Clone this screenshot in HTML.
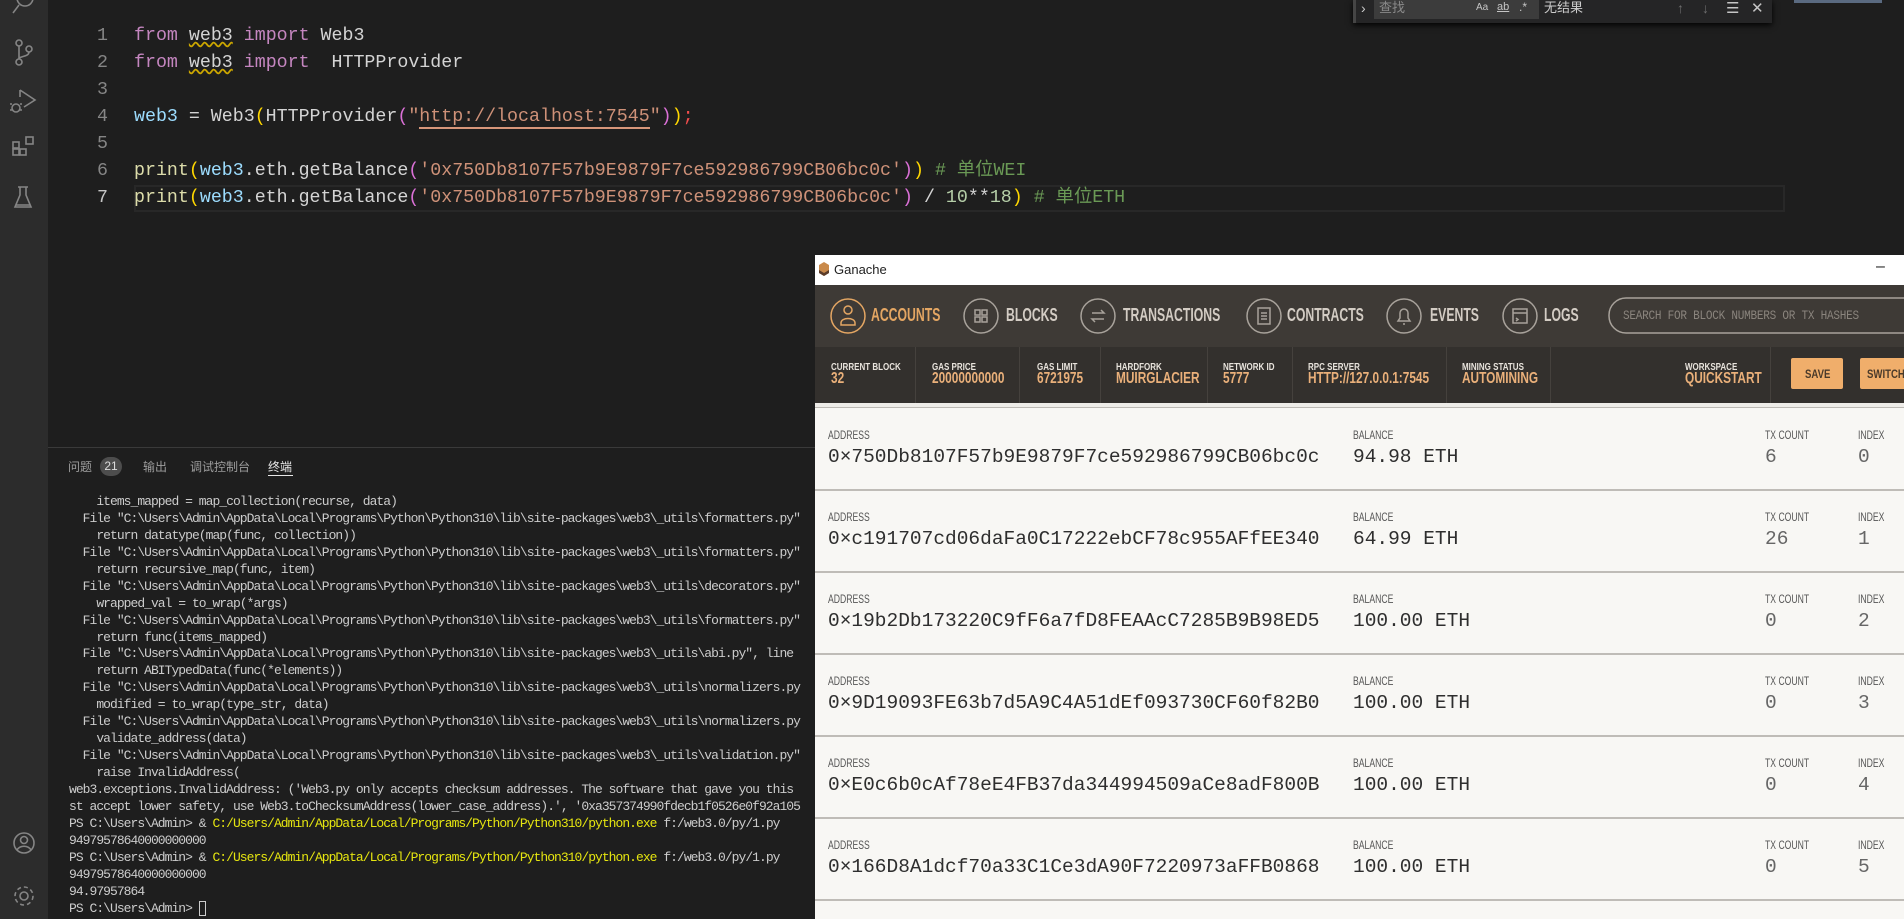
<!DOCTYPE html>
<html><head><meta charset="utf-8">
<style>
*{margin:0;padding:0;box-sizing:border-box}
body{width:1904px;height:919px;background:#1e1e1e;position:relative;overflow:hidden;font-family:"Liberation Sans","Noto Sans CJK SC",sans-serif}
.a{position:absolute;white-space:pre}
.code{font-family:"Liberation Mono","Noto Sans CJK SC",monospace;font-size:18.3px;line-height:27px;color:#d4d4d4}
.ln{color:#858585;text-align:right;width:40px}
.k{color:#c586c0}.v{color:#9cdcfe}.f{color:#dcdcaa}.s{color:#ce9178}.c{color:#6a9955}.n{color:#b5cea8}.y{color:#ffd700}.p{color:#da70d6}
.term{font-family:"Liberation Mono","Noto Sans CJK SC",monospace;font-size:13px;letter-spacing:-0.97px;line-height:16.93px;color:#cccccc}
.ty{color:#e5e510}
.nav{font-weight:bold;font-size:18px;color:#d3ccc4;transform:scaleX(.68);transform-origin:left center}
.sl{font-weight:bold;font-size:10px;color:#e8e3dc;transform:scaleX(.8);transform-origin:left center}
.sv{font-weight:bold;font-size:16px;color:#eab07a;transform:scaleX(.74);transform-origin:left center}
.rl{font-size:12px;color:#555;transform:scaleX(.72);transform-origin:left center}
.rv{font-family:"Liberation Mono",monospace;font-size:19.5px;color:#2e2e2e}
.rg{font-family:"Liberation Mono",monospace;font-size:19.5px;color:#666}
</style></head><body>

<div class="a" style="left:0;top:0;width:48px;height:919px;background:#2c2c2c"></div>
<svg class="a" style="left:0;top:0" width="48" height="919" fill="none" stroke="#858585" stroke-width="1.6">
<circle cx="25" cy="-2" r="8"/><line x1="19" y1="5" x2="13" y2="13"/>
<circle cx="19" cy="43" r="3"/><circle cx="29" cy="49" r="3"/><circle cx="19" cy="62" r="3"/><path d="M19 46V59M29 52c0 5-10 4-10 7"/>
<path d="M20 90L35 100L24 107M20 90V97"/><circle cx="16" cy="108" r="4"/><path d="M10 104h2M10 110h2M20 104h2M20 110h2"/>
<rect x="13" y="142" width="6" height="6"/><rect x="13" y="149" width="6" height="6"/><rect x="20" y="149" width="6" height="6"/><rect x="26" y="137" width="7" height="7"/>
<path d="M18 187h10M20 187v8l-5 12h16l-5-12v-8M16 205h14"/>
<circle cx="24" cy="843" r="10"/><circle cx="24" cy="840" r="3.5"/><path d="M17 850c3-5 11-5 14 0"/>
<circle cx="24" cy="896" r="4"/><circle cx="24" cy="896" r="9" stroke-dasharray="4 3"/>
</svg>

<div class="a" style="left:1353px;top:0;width:419px;height:23px;background:#252526;box-shadow:0 2px 6px #000"></div>
<div class="a" style="left:1353px;top:0;width:3px;height:23px;background:#454545"></div>
<div class="a" style="left:1361px;top:0;color:#ccc;font-size:14px">›</div>
<div class="a" style="left:1374px;top:0;width:165px;height:19px;background:#3c3c3c"></div>
<div class="a" style="left:1379px;top:0;color:#8a8a8a;font-size:13px;line-height:16px">查找</div>
<div class="a" style="left:1476px;top:2px;color:#c5c5c5;font-size:10px">Aa</div>
<div class="a" style="left:1497px;top:1px;color:#c5c5c5;font-size:11px;text-decoration:underline">ab</div>
<div class="a" style="left:1519px;top:0;color:#c5c5c5;font-size:12px">.*</div>
<div class="a" style="left:1544px;top:0;color:#ccc;font-size:13px;line-height:16px">无结果</div>
<div class="a" style="left:1677px;top:0;color:#6e6e6e;font-size:14px">↑</div>
<div class="a" style="left:1702px;top:0;color:#6e6e6e;font-size:14px">↓</div>
<div class="a" style="left:1726px;top:-1px;color:#c5c5c5;font-size:15px">☰</div>
<div class="a" style="left:1751px;top:-1px;color:#c5c5c5;font-size:15px">✕</div>
<div class="a" style="left:1794px;top:0;width:88px;height:3px;background:#5a6a80"></div>

<div class="a" style="left:134px;top:185px;width:1651px;height:27px;border:2px solid #282828"></div>
<div class="a code ln" style="left:68px;top:23px">1
2
3
4
5
6
<span style="color:#c6c6c6">7</span></div>
<div class="a code" style="left:134px;top:23px"><span class="k">from</span> <span style="text-decoration:underline wavy #cca700">web3</span> <span class="k">import</span> Web3
<span class="k">from</span> <span style="text-decoration:underline wavy #cca700">web3</span> <span class="k">import</span>  HTTPProvider

<span class="v">web3</span> = Web3<span class="y">(</span>HTTPProvider<span class="p">(</span><span class="s">"<span style="border-bottom:2px solid #d7967a">http://localhost:7545</span>"</span><span class="p">)</span><span class="y">)</span><span style="color:#f14c4c">;</span>

<span class="f">print</span><span class="y">(</span><span class="v">web3</span>.eth.getBalance<span class="p">(</span><span class="s">'0x750Db8107F57b9E9879F7ce592986799CB06bc0c'</span><span class="p">)</span><span class="y">)</span> <span class="c"># 单位WEI</span>
<span class="f">print</span><span class="y">(</span><span class="v">web3</span>.eth.getBalance<span class="p">(</span><span class="s">'0x750Db8107F57b9E9879F7ce592986799CB06bc0c'</span><span class="p">)</span> / <span class="n">10</span>**<span class="n">18</span><span class="y">)</span> <span class="c"># 单位ETH</span></div>

<div class="a" style="left:48px;top:447px;width:800px;height:1px;background:#3a3a3a"></div>
<div class="a" style="left:68px;top:458px;color:#9d9d9d;font-size:12px">问题</div>
<div class="a" style="left:100px;top:457px;width:22px;height:19px;border-radius:10px;background:#4d4d4d;color:#ddd;font-size:12px;text-align:center;line-height:19px">21</div>
<div class="a" style="left:143px;top:458px;color:#9d9d9d;font-size:12px">输出</div>
<div class="a" style="left:190px;top:458px;color:#9d9d9d;font-size:12px">调试控制台</div>
<div class="a" style="left:268px;top:458px;color:#e7e7e7;font-size:12px">终端</div>
<div class="a" style="left:268px;top:475px;width:25px;height:1px;background:#e7e7e7"></div>
<div class="a term" style="left:69px;top:494px">    items_mapped = map_collection(recurse, data)
  File "C:\Users\Admin\AppData\Local\Programs\Python\Python310\lib\site-packages\web3\_utils\formatters.py"
    return datatype(map(func, collection))
  File "C:\Users\Admin\AppData\Local\Programs\Python\Python310\lib\site-packages\web3\_utils\formatters.py"
    return recursive_map(func, item)
  File "C:\Users\Admin\AppData\Local\Programs\Python\Python310\lib\site-packages\web3\_utils\decorators.py"
    wrapped_val = to_wrap(*args)
  File "C:\Users\Admin\AppData\Local\Programs\Python\Python310\lib\site-packages\web3\_utils\formatters.py"
    return func(items_mapped)
  File "C:\Users\Admin\AppData\Local\Programs\Python\Python310\lib\site-packages\web3\_utils\abi.py", line
    return ABITypedData(func(*elements))
  File "C:\Users\Admin\AppData\Local\Programs\Python\Python310\lib\site-packages\web3\_utils\normalizers.py
    modified = to_wrap(type_str, data)
  File "C:\Users\Admin\AppData\Local\Programs\Python\Python310\lib\site-packages\web3\_utils\normalizers.py
    validate_address(data)
  File "C:\Users\Admin\AppData\Local\Programs\Python\Python310\lib\site-packages\web3\_utils\validation.py"
    raise InvalidAddress(
web3.exceptions.InvalidAddress: ('Web3.py only accepts checksum addresses. The software that gave you this
st accept lower safety, use Web3.toChecksumAddress(lower_case_address).', '0xa357374990fdecb1f0526e0f92a105
PS C:\Users\Admin&gt; &amp; <span class="ty">C:/Users/Admin/AppData/Local/Programs/Python/Python310/python.exe</span> f:/web3.0/py/1.py
94979578640000000000
PS C:\Users\Admin&gt; &amp; <span class="ty">C:/Users/Admin/AppData/Local/Programs/Python/Python310/python.exe</span> f:/web3.0/py/1.py
94979578640000000000
94.97957864
PS C:\Users\Admin&gt; <span style="display:inline-block;width:7px;height:15px;border:1px solid #ccc;vertical-align:middle"></span></div>

<div class="a" style="left:815px;top:255px;width:1089px;height:664px;background:#f8f7f4"></div>
<div class="a" style="left:815px;top:255px;width:1089px;height:30px;background:#fff"></div>
<svg class="a" style="left:818px;top:261px" width="12" height="16"><path d="M6 1L11 4V12L6 15L1 12V4Z" fill="#c98a4b"/><path d="M1 9L6 12L11 9V12L6 15L1 12Z" fill="#5a3c2a"/></svg>
<div class="a" style="left:834px;top:262px;font-size:13px;color:#222">Ganache</div>
<div class="a" style="left:1876px;top:258px;font-size:16px;color:#222">–</div>
<div class="a" style="left:815px;top:285px;width:1089px;height:62px;background:#3e3a36"></div>
<svg class="a" style="left:815px;top:285px" width="1089" height="62" fill="none" stroke="#a8a29b" stroke-width="1.5">
<circle cx="33" cy="31" r="17" stroke="#e4a663"/><circle cx="33" cy="25" r="4" stroke="#e4a663"/><path d="M26 38c0-6 14-6 14 0v2h-14z" stroke="#e4a663"/>
<circle cx="166" cy="31" r="17"/><rect x="160" y="25" width="5" height="5"/><rect x="167" y="25" width="5" height="5"/><rect x="160" y="32" width="5" height="5"/><rect x="167" y="32" width="5" height="5"/>
<circle cx="283" cy="31" r="17"/><path d="M277 28h12l-3-3M289 34h-12l3 3"/>
<circle cx="449" cy="31" r="17"/><rect x="443" y="23" width="12" height="16"/><path d="M446 28h6M446 31h6M446 34h6"/>
<circle cx="589" cy="31" r="17"/><path d="M583 36h12l-2-3v-5a4 4 0 0 0-8 0v5z M588 39h2"/>
<circle cx="705" cy="31" r="17"/><rect x="698" y="24" width="14" height="14"/><path d="M698 28h14M701 33l2 1.5-2 1.5"/>
<rect x="794" y="13" width="320" height="35" rx="17"/>
</svg>
<div class="a nav" style="left:871px;top:305px;color:#e4a663">ACCOUNTS</div>
<div class="a nav" style="left:1006px;top:305px">BLOCKS</div>
<div class="a nav" style="left:1123px;top:305px">TRANSACTIONS</div>
<div class="a nav" style="left:1287px;top:305px">CONTRACTS</div>
<div class="a nav" style="left:1430px;top:305px">EVENTS</div>
<div class="a nav" style="left:1544px;top:305px">LOGS</div>
<div class="a" style="left:1623px;top:308px;font-family:'Liberation Mono',monospace;font-size:13px;color:#8a847d;letter-spacing:-0.3px;transform:scaleX(.85);transform-origin:left">SEARCH FOR BLOCK NUMBERS OR TX HASHES</div>

<div class="a" style="left:815px;top:347px;width:1089px;height:56px;background:#33302d"></div>
<div class="a" style="left:915px;top:347px;width:1px;height:56px;background:#45413d"></div>
<div class="a" style="left:1019px;top:347px;width:1px;height:56px;background:#45413d"></div>
<div class="a" style="left:1100px;top:347px;width:1px;height:56px;background:#45413d"></div>
<div class="a" style="left:1207px;top:347px;width:1px;height:56px;background:#45413d"></div>
<div class="a" style="left:1292px;top:347px;width:1px;height:56px;background:#45413d"></div>
<div class="a" style="left:1446px;top:347px;width:1px;height:56px;background:#45413d"></div>
<div class="a" style="left:1550px;top:347px;width:1px;height:56px;background:#45413d"></div>
<div class="a" style="left:1770px;top:347px;width:1px;height:56px;background:#45413d"></div>
<div class="a sl" style="left:831px;top:362px">CURRENT BLOCK</div><div class="a sv" style="left:831px;top:370px">32</div>
<div class="a sl" style="left:932px;top:362px">GAS PRICE</div><div class="a sv" style="left:932px;top:370px">20000000000</div>
<div class="a sl" style="left:1037px;top:362px">GAS LIMIT</div><div class="a sv" style="left:1037px;top:370px">6721975</div>
<div class="a sl" style="left:1116px;top:362px">HARDFORK</div><div class="a sv" style="left:1116px;top:370px">MUIRGLACIER</div>
<div class="a sl" style="left:1223px;top:362px">NETWORK ID</div><div class="a sv" style="left:1223px;top:370px">5777</div>
<div class="a sl" style="left:1308px;top:362px">RPC SERVER</div><div class="a sv" style="left:1308px;top:370px">HTTP://127.0.0.1:7545</div>
<div class="a sl" style="left:1462px;top:362px">MINING STATUS</div><div class="a sv" style="left:1462px;top:370px">AUTOMINING</div>
<div class="a sl" style="left:1685px;top:362px">WORKSPACE</div><div class="a sv" style="left:1685px;top:370px">QUICKSTART</div>
<div class="a" style="left:1791px;top:358px;width:52px;height:31px;background:#f0ae6b;border-radius:2px"></div>
<div class="a sl" style="left:1805px;top:367px;font-size:12px;color:#4a3a2a">SAVE</div>
<div class="a" style="left:1860px;top:358px;width:50px;height:31px;background:#f0ae6b;border-radius:2px"></div>
<div class="a sl" style="left:1867px;top:367px;font-size:12px;color:#4a3a2a">SWITCH</div>
<div class="a" style="left:815px;top:403px;width:1089px;height:5px;background:#eeece8;border-bottom:1px solid #bbb8b3"></div>

<div class="a" style="left:815px;top:489px;width:1089px;height:2px;background:#bfbcb7"></div>
<div class="a" style="left:815px;top:571px;width:1089px;height:2px;background:#bfbcb7"></div>
<div class="a" style="left:815px;top:653px;width:1089px;height:2px;background:#bfbcb7"></div>
<div class="a" style="left:815px;top:735px;width:1089px;height:2px;background:#bfbcb7"></div>
<div class="a" style="left:815px;top:817px;width:1089px;height:2px;background:#bfbcb7"></div>
<div class="a" style="left:815px;top:899px;width:1089px;height:2px;background:#bfbcb7"></div>

<div class="a rl" style="left:828px;top:428px">ADDRESS</div><div class="a rl" style="left:1353px;top:428px">BALANCE</div><div class="a rl" style="left:1765px;top:428px">TX COUNT</div><div class="a rl" style="left:1858px;top:428px">INDEX</div>
<div class="a rv" style="left:828px;top:446px">0×750Db8107F57b9E9879F7ce592986799CB06bc0c</div><div class="a rv" style="left:1353px;top:446px">94.98 ETH</div><div class="a rg" style="left:1765px;top:446px">6</div><div class="a rg" style="left:1858px;top:446px">0</div>

<div class="a rl" style="left:828px;top:510px">ADDRESS</div><div class="a rl" style="left:1353px;top:510px">BALANCE</div><div class="a rl" style="left:1765px;top:510px">TX COUNT</div><div class="a rl" style="left:1858px;top:510px">INDEX</div>
<div class="a rv" style="left:828px;top:528px">0×c191707cd06daFa0C17222ebCF78c955AFfEE340</div><div class="a rv" style="left:1353px;top:528px">64.99 ETH</div><div class="a rg" style="left:1765px;top:528px">26</div><div class="a rg" style="left:1858px;top:528px">1</div>

<div class="a rl" style="left:828px;top:592px">ADDRESS</div><div class="a rl" style="left:1353px;top:592px">BALANCE</div><div class="a rl" style="left:1765px;top:592px">TX COUNT</div><div class="a rl" style="left:1858px;top:592px">INDEX</div>
<div class="a rv" style="left:828px;top:610px">0×19b2Db173220C9fF6a7fD8FEAAcC7285B9B98ED5</div><div class="a rv" style="left:1353px;top:610px">100.00 ETH</div><div class="a rg" style="left:1765px;top:610px">0</div><div class="a rg" style="left:1858px;top:610px">2</div>

<div class="a rl" style="left:828px;top:674px">ADDRESS</div><div class="a rl" style="left:1353px;top:674px">BALANCE</div><div class="a rl" style="left:1765px;top:674px">TX COUNT</div><div class="a rl" style="left:1858px;top:674px">INDEX</div>
<div class="a rv" style="left:828px;top:692px">0×9D19093FE63b7d5A9C4A51dEf093730CF60f82B0</div><div class="a rv" style="left:1353px;top:692px">100.00 ETH</div><div class="a rg" style="left:1765px;top:692px">0</div><div class="a rg" style="left:1858px;top:692px">3</div>

<div class="a rl" style="left:828px;top:756px">ADDRESS</div><div class="a rl" style="left:1353px;top:756px">BALANCE</div><div class="a rl" style="left:1765px;top:756px">TX COUNT</div><div class="a rl" style="left:1858px;top:756px">INDEX</div>
<div class="a rv" style="left:828px;top:774px">0×E0c6b0cAf78eE4FB37da344994509aCe8adF800B</div><div class="a rv" style="left:1353px;top:774px">100.00 ETH</div><div class="a rg" style="left:1765px;top:774px">0</div><div class="a rg" style="left:1858px;top:774px">4</div>

<div class="a rl" style="left:828px;top:838px">ADDRESS</div><div class="a rl" style="left:1353px;top:838px">BALANCE</div><div class="a rl" style="left:1765px;top:838px">TX COUNT</div><div class="a rl" style="left:1858px;top:838px">INDEX</div>
<div class="a rv" style="left:828px;top:856px">0×166D8A1dcf70a33C1Ce3dA90F7220973aFFB0868</div><div class="a rv" style="left:1353px;top:856px">100.00 ETH</div><div class="a rg" style="left:1765px;top:856px">0</div><div class="a rg" style="left:1858px;top:856px">5</div>

</body></html>
